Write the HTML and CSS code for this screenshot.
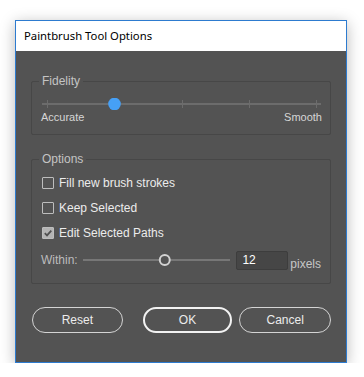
FILE: index.html
```html
<!DOCTYPE html>
<html lang="en">
<head>
    <meta charset="UTF-8">
    <title>Paintbrush Tool Options</title>
    <link rel="stylesheet" href="styles.css">
</head>
<body>
    <div class="dialog">
        <div class="title-bar">Paintbrush Tool Options</div>
        <div class="dialog-body">
            <fieldset class="group fidelity">
                <legend>Fidelity</legend>
                <svg class="fidelity-slider" width="279" height="12" viewBox="0 0 279 12">
                    <rect x="0" y="5" width="279" height="2" fill="#6c6c6c"/>
                    <rect x="5" y="2" width="1" height="8" fill="#6c6c6c"/>
                    <rect x="72" y="2" width="1" height="8" fill="#6c6c6c"/>
                    <rect x="140" y="2" width="1" height="8" fill="#6c6c6c"/>
                    <rect x="207" y="2" width="1" height="8" fill="#6c6c6c"/>
                    <rect x="274" y="2" width="1" height="8" fill="#6c6c6c"/>
                    <circle cx="72.5" cy="6" r="6.3" fill="#46a0f6"/>
                </svg>
                <div class="range-labels">
                    <span>Accurate</span>
                    <span>Smooth</span>
                </div>
            </fieldset>

            <fieldset class="group options">
                <legend>Options</legend>
                <label class="check-row"><span class="check"></span>Fill new brush strokes</label>
                <label class="check-row"><span class="check"></span>Keep Selected</label>
                <label class="check-row">
                    <span class="check checked">
                        <svg width="10" height="10" viewBox="0 0 10 10"><path d="M1.8 5.2 L4 7.4 L8.3 2.6" fill="none" stroke="#505050" stroke-width="1.8"/></svg>
                    </span>Edit Selected Paths
                </label>
                <div class="within-row">
                    <span class="within-label">Within:</span>
                    <svg class="within-slider" width="148" height="14" viewBox="0 0 148 14">
                        <rect x="0" y="6" width="148" height="2" fill="#777"/>
                        <circle cx="82" cy="7" r="5" fill="#535353" stroke="#d2d2d2" stroke-width="2"/>
                    </svg>
                    <div class="num-input">12</div>
                    <span class="unit">pixels</span>
                </div>
            </fieldset>

            <div class="buttons">
                <button class="btn reset">Reset</button>
                <button class="btn ok">OK</button>
                <button class="btn cancel">Cancel</button>
            </div>
        </div>
    </div>
</body>
</html>
```

FILE: styles.css
```css
body {
    margin: 0;
    background: #fff;
    font-family: 'Liberation Sans', Arial, sans-serif;
}

.dialog {
    margin: 20px 0 0 15px;
    width: 330px;
    border: 1px solid #2d7bcf;
    box-shadow: 0 3px 14px rgba(0, 0, 0, 0.28);
}

.title-bar {
    height: 30px;
    line-height: 30px;
    padding-left: 8px;
    background: #fff;
    color: #000;
    font-family: 'Noto Sans', sans-serif;
    font-size: 11.3px;
}

.dialog-body {
    background: #535353;
    height: 311px;
    padding: 23px 15px 0 15px;
    box-sizing: border-box;
}

.group {
    margin: 0;
    border: 1px solid #474747;
    border-radius: 2px;
    padding: 0 9px 0 10px;
    min-width: 0;
}

.group legend {
    padding: 0 3px;
    margin-left: -3px;
    height: 14px;
    line-height: 14px;
    font-size: 12px;
    color: #c4c4c4;
}

.fidelity {
    padding-top: 10px;
    padding-bottom: 10px;
}

.fidelity-slider {
    display: block;
}

.range-labels {
    display: flex;
    justify-content: space-between;
    margin: 0 -1px;
    height: 14px;
    line-height: 14px;
    font-size: 11px;
    color: #d6d6d6;
}

.options {
    margin-top: 17px;
    padding-top: 4px;
    padding-bottom: 11px;
}

.check-row {
    display: flex;
    align-items: center;
    height: 25px;
    font-size: 12px;
    color: #ececec;
}

.check {
    width: 10px;
    height: 10px;
    border: 1px solid #bdbdbd;
    border-radius: 1px;
    margin-right: 5px;
    display: flex;
    align-items: center;
    justify-content: center;
}

.check.checked {
    background: #b4b4b4;
}

.within-row {
    display: flex;
    align-items: center;
    height: 24px;
    margin: 3px 0 0 -1px;
    font-size: 12px;
}

.within-label {
    color: #bcbcbc;
    width: 42px;
}

.within-slider {
    display: block;
}

.num-input {
    margin-left: 6px;
    width: 45px;
    height: 17px;
    line-height: 17px;
    padding-left: 5px;
    background: #464646;
    border: 1px solid #3d3d3d;
    border-radius: 2px;
    color: #fff;
}

.unit {
    align-self: flex-end;
    margin-left: 2px;
    color: #c6c6c6;
    line-height: 14px;
    padding-bottom: 1px;
}

.buttons {
    display: flex;
    margin-top: 23px;
    padding-left: 1px;
}

.btn {
    height: 26px;
    border: 1.5px solid #d4d4d4;
    border-radius: 13px;
    background: transparent;
    color: #ececec;
    font-family: 'Liberation Sans', Arial, sans-serif;
    font-size: 12px;
    padding: 0;
    cursor: pointer;
}

.reset {
    width: 91px;
}

.ok {
    width: 90px;
    margin-left: 20px;
    border: 2px solid #f2f2f2;
}

.cancel {
    width: 92px;
    margin-left: 7px;
}
```
